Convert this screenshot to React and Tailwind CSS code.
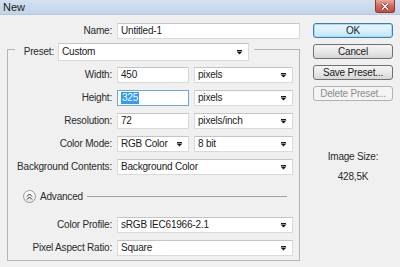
import React from "react";

const font = { fontFamily: '"Liberation Sans", Arial, sans-serif' };

function Arrow() {
  return (
    <svg width="7" height="5" viewBox="0 0 7 5" className="shrink-0">
      <rect x="1" y="0" width="5" height="1" fill="#1a1a1a" />
      <path d="M0.5 1.5 H6.5 L3.5 4.5 Z" fill="#1a1a1a" />
    </svg>
  );
}

function Select({ w, children, className = "" }) {
  return (
    <div
      className={`h-[16px] ${w} flex items-center justify-between bg-white border border-[#dadada] border-t-[#c4c4c4] pl-[3px] pr-[5px] text-[10px] text-[#1a1a1a] leading-none ${className}`}
    >
      <span className="whitespace-nowrap">{children}</span>
      <Arrow />
    </div>
  );
}

function Input({ w, children, focused = false, className = "" }) {
  return (
    <div
      className={`h-[16px] ${w} flex items-center bg-white border ${
        focused ? "border-[#6ea5db]" : "border-[#dadada] border-t-[#c4c4c4]"
      } pl-[3px] text-[10px] text-[#1a1a1a] leading-none ${className}`}
    >
      {children}
    </div>
  );
}

function Label({ w, children }) {
  return (
    <div className={`${w} shrink-0 text-right text-[10px] text-[#2a2a2a] leading-none whitespace-nowrap`}>
      {children}
    </div>
  );
}

function Row({ label, children }) {
  return (
    <div className="flex items-center h-[16px]">
      <Label w="w-[104px]">{label}</Label>
      <div className="ml-[5px] flex items-center gap-[5px]">{children}</div>
    </div>
  );
}

function Button({ children, primary = false, disabled = false }) {
  let cls =
    "border-[#707070] bg-gradient-to-b from-[#f4f4f4] via-[#e9e9e9] to-[#d6d6d6] text-[#1a1a1a]";
  if (primary)
    cls =
      "border-[#3c7fb1] bg-gradient-to-b from-[#eaf6fd] via-[#d9f0fc] to-[#bee6fd] text-[#1a1a1a] shadow-[inset_0_0_0_1px_#a8d9f5]";
  if (disabled) cls = "border-[#adb2b5] bg-[#f4f4f4] text-[#8d8d8d]";
  return (
    <div
      className={`h-[15px] w-[80px] rounded-[3px] border flex items-center justify-center text-[10px] leading-none ${cls}`}
    >
      {children}
    </div>
  );
}

export default function App() {
  return (
    <div
      className="w-[400px] h-[267px] bg-[#f0f0f0] flex flex-col overflow-hidden tracking-[-0.2px]"
      style={font}
    >
      {/* Title bar */}
      <div className="h-[15px] shrink-0 bg-gradient-to-b from-[#d3e1f1] to-[#c2d4ea] border-b border-[#b8c9df] flex items-start justify-between">
        <div className="pl-[3px] pt-[2px] text-[11px] leading-none text-[#1a1a1a] tracking-normal">New</div>
        <div className="mr-[5px] w-[20px] h-[13px] rounded-b-[3px] border border-t-0 border-[#8d3a33] bg-gradient-to-b from-[#e9a79f] via-[#d2685e] to-[#c44a3e] flex items-center justify-center">
          <svg width="8" height="7" viewBox="0 0 8 7">
            <path d="M1 0.5 L7 6.5 M7 0.5 L1 6.5" stroke="#5a1e18" strokeWidth="2.6" />
            <path d="M1 0.5 L7 6.5 M7 0.5 L1 6.5" stroke="#ffffff" strokeWidth="1.6" />
          </svg>
        </div>
      </div>

      <div className="flex">
        {/* Left column */}
        <div className="w-[300px] shrink-0 flex flex-col">
          <div className="mt-[8px] flex items-center h-[16px]">
            <Label w="w-[112px]">Name:</Label>
            <Input w="w-[183px]" className="ml-[5px]">Untitled-1</Input>
          </div>

          {/* Group box */}
          <div className="mt-[4px] ml-[7px] w-[293px] flex flex-col">
            <div className="flex h-[18px]">
              <div className="w-[8px] mt-[6px] border-t border-l border-[#b5b5b5]" />
              <div className="w-[39px] flex items-center justify-end text-[10px] text-[#2a2a2a] leading-none">
                Preset:
              </div>
              <Select w="w-[191px]" className="ml-[4px] h-[18px]">Custom</Select>
              <div className="flex-1 ml-[5px] mt-[6px] border-t border-r border-[#b5b5b5]" />
            </div>
            <div className="border-l border-r border-b border-[#b5b5b5] flex flex-col pt-[6px] pb-[4px]">
              <div className="flex flex-col gap-[7px]">
                <Row label="Width:">
                  <Input w="w-[72px]">450</Input>
                  <Select w="w-[99px]">pixels</Select>
                </Row>
                <Row label="Height:">
                  <Input w="w-[72px]" focused>
                    <span className="bg-[#3399ff] text-white px-[1px] py-[1px]">325</span>
                  </Input>
                  <Select w="w-[99px]">pixels</Select>
                </Row>
                <Row label="Resolution:">
                  <Input w="w-[72px]">72</Input>
                  <Select w="w-[99px]">pixels/inch</Select>
                </Row>
                <Row label="Color Mode:">
                  <Select w="w-[72px]">RGB Color</Select>
                  <Select w="w-[99px]">8 bit</Select>
                </Row>
                <Row label="Background Contents:">
                  <Select w="w-[176px]">Background Color</Select>
                </Row>
              </div>

              {/* Advanced */}
              <div className="mt-[15px] flex items-center h-[13px]">
                <div className="ml-[15px] w-[13px] h-[13px] rounded-full border border-[#9a9a9a] bg-gradient-to-b from-[#ffffff] to-[#e4e4e4] flex items-center justify-center">
                  <svg width="7" height="7" viewBox="0 0 7 7">
                    <path d="M1 3.5 L3.5 1 L6 3.5 M1 6.5 L3.5 4 L6 6.5" stroke="#333" strokeWidth="1" fill="none" />
                  </svg>
                </div>
                <div className="ml-[4px] text-[10px] text-[#2a2a2a] leading-none">Advanced</div>
                <div className="ml-[4px] mr-[12px] flex-1 border-t border-[#a0a0a0]" />
              </div>

              <div className="mt-[14px] flex flex-col gap-[7px]">
                <Row label="Color Profile:">
                  <Select w="w-[176px]">sRGB IEC61966-2.1</Select>
                </Row>
                <Row label="Pixel Aspect Ratio:">
                  <Select w="w-[176px]">Square</Select>
                </Row>
              </div>
            </div>
          </div>
        </div>

        {/* Right column */}
        <div className="ml-[13px] mt-[8px] flex flex-col gap-[6px] w-[80px]">
          <Button primary>OK</Button>
          <Button>Cancel</Button>
          <Button>Save Preset...</Button>
          <Button disabled>Delete Preset...</Button>
          <div className="mt-[45px] flex flex-col items-center text-[10px] text-[#2a2a2a] leading-none">
            <div>Image Size:</div>
            <div className="mt-[10px]">428,5K</div>
          </div>
        </div>
      </div>
    </div>
  );
}
